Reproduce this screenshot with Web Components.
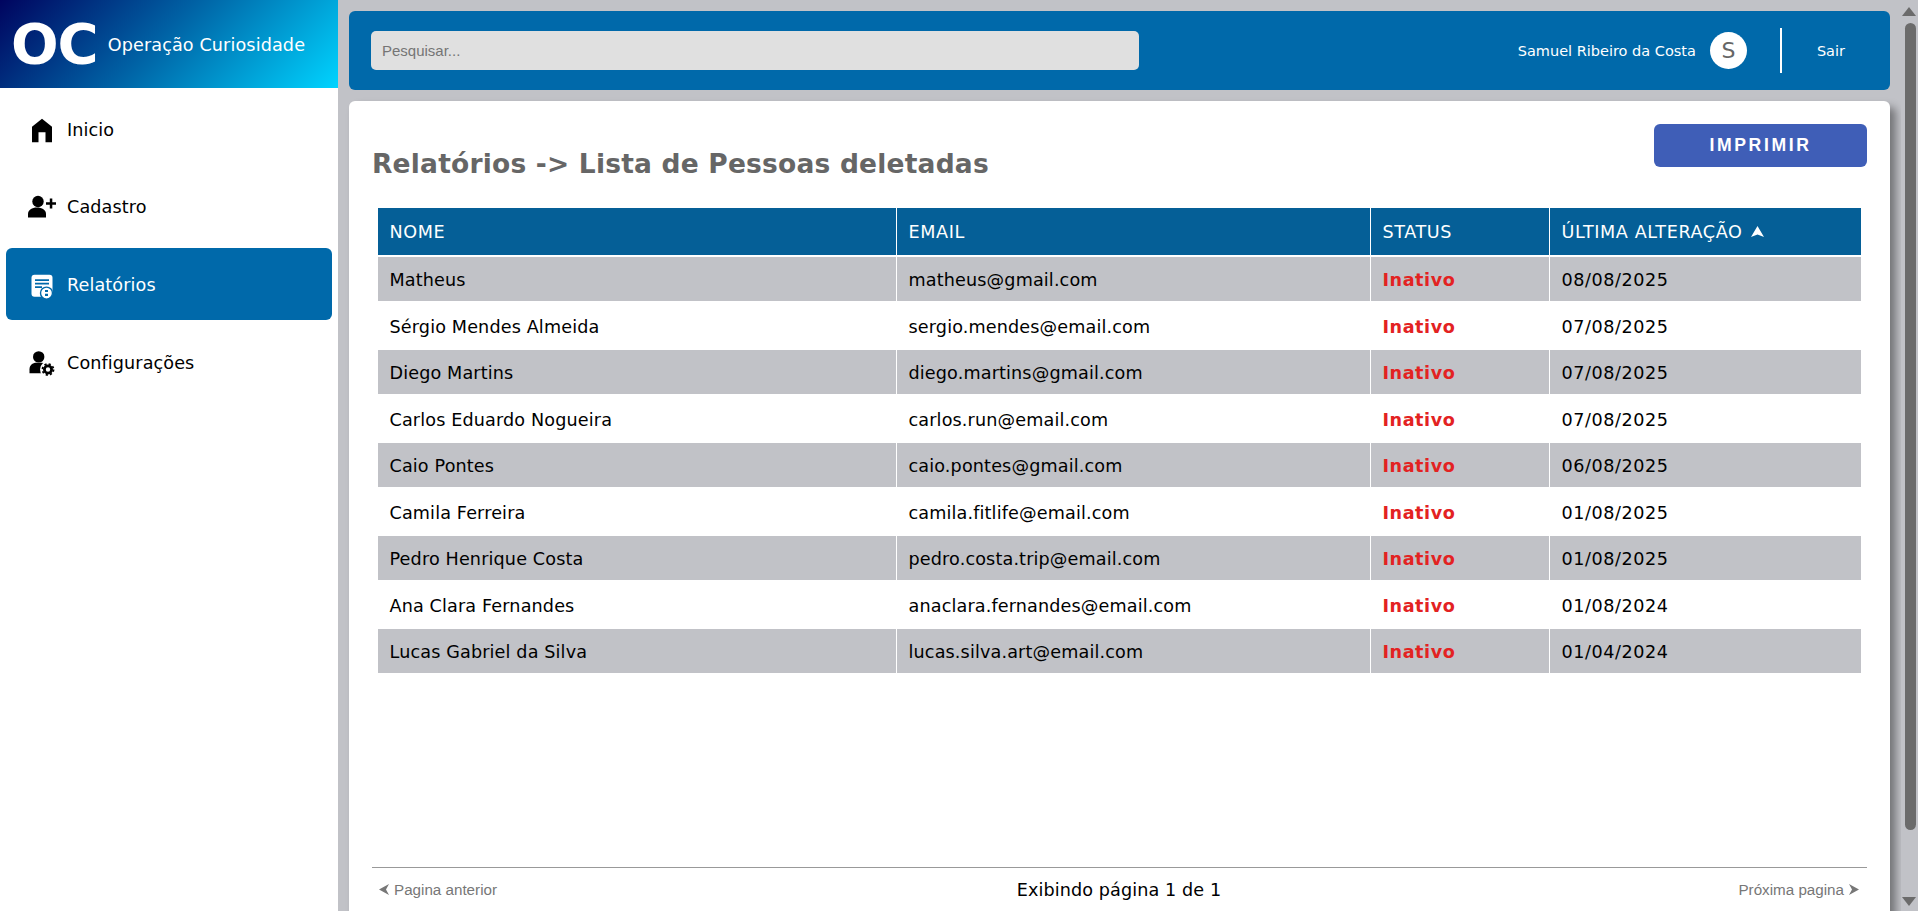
<!DOCTYPE html>
<html lang="pt-BR">
<head>
<meta charset="utf-8">
<title>Operação Curiosidade</title>
<style>
  html, body { margin: 0; height: 100%; overflow: hidden; background: #c1c2c7; }
  body { font-family: "DejaVu Sans", sans-serif; }
</style>
</head>
<body>
<oc-app>
  <oc-sidebar slot="sidebar">
    <oc-nav-item icon="home">Inicio</oc-nav-item>
    <oc-nav-item icon="user-plus">Cadastro</oc-nav-item>
    <oc-nav-item icon="report" active>Relatórios</oc-nav-item>
    <oc-nav-item icon="user-gear">Configurações</oc-nav-item>
  </oc-sidebar>
  <oc-topbar slot="topbar" user="Samuel Ribeiro da Costa"></oc-topbar>
  <oc-report-card slot="content" heading="Relatórios -> Lista de Pessoas deletadas">
    <oc-people-table></oc-people-table>
    <oc-pagination slot="footer" page="1" total="1"></oc-pagination>
  </oc-report-card>
  <oc-scrollbar slot="scrollbar"></oc-scrollbar>
</oc-app>

<script>
const ICONS = {
  home: `<svg viewBox="0 -1.200 40 40" width="40" height="40"><path d="M20 7.500 30 15.500V31h-6.500V21h-7v10H10V15.500z" fill="currentColor"/></svg>`,
  "user-plus": `<svg viewBox="0 -1.500 40 40" width="40" height="40"><circle cx="16" cy="13" r="5.700" fill="currentColor"/><path d="M6 29v-3.500c0-4 4-6.500 9-6.500s9 2.500 9 6.500V29z" fill="currentColor"/><path d="M27.800 10h2.500v3.800h3.700v2.500h-3.700V20h-2.500v-3.700H24v-2.500h3.800z" fill="currentColor"/></svg>`,
  report: `<svg viewBox="0 -.800 40 40" width="40" height="40"><rect x="9.500" y="9" width="21" height="22" rx="3" fill="currentColor"/><path d="M13 13.500h14v1.600H13zm0 3.500h14v1.600H13zm0 3.500h7v1.600h-7z" fill="var(--nav-bg)"/><circle cx="24.500" cy="27.300" r="6" fill="currentColor" stroke="var(--nav-bg)" stroke-width="1.400"/><path d="M23 24.300h3v2h-3zm0 3.700h3v2.200h-3z" fill="var(--nav-bg)"/></svg>`,
  "user-gear": `<svg viewBox="0 -1.200 40 40" width="40" height="40"><circle cx="16.700" cy="12.700" r="5.700" fill="currentColor"/><path d="M7.500 29v-4c0-4 3-6.500 7-6.500h5c3 0 5 1 6 3V29z" fill="currentColor"/><circle cx="26" cy="25.300" r="8" fill="var(--nav-bg)"/><circle cx="26" cy="25.300" r="3.600" fill="none" stroke="currentColor" stroke-width="2.800"/><circle cx="26" cy="25.300" r="5.500" fill="none" stroke="currentColor" stroke-width="1.800" stroke-dasharray="2.160 2.160"/></svg>`
};

class OcApp extends HTMLElement {
  constructor() {
    super();
    this.attachShadow({ mode: "open" });
    this.shadowRoot.innerHTML = `
      <style>
        :host { display: flex; width: 1918px; height: 911px; overflow: hidden; background: #c1c2c7; }
        .side { flex: 0 0 338px; height: 100%; }
        main {
          flex: 1; min-width: 0; height: 100%; overflow: hidden;
          padding: 11px 11px 0 11px; box-sizing: border-box;
          display: flex; flex-direction: column; gap: 11px;
        }
        .bar { flex: 0 0 17px; height: 100%; }
      </style>
      <div class="side"><slot name="sidebar"></slot></div>
      <main>
        <slot name="topbar"></slot>
        <slot name="content"></slot>
      </main>
      <div class="bar"><slot name="scrollbar"></slot></div>
    `;
  }
}

class OcSidebar extends HTMLElement {
  constructor() {
    super();
    this.attachShadow({ mode: "open" });
    this.shadowRoot.innerHTML = `
      <style>
        :host { display: flex; flex-direction: column; height: 100%; background: #fff; }
        .brand {
          height: 88px; box-sizing: border-box; padding-left: 11px;
          display: flex; align-items: center; gap: 10px; color: #fff;
          background: linear-gradient(135deg, #00045f 0%, #0069aa 50%, #00d4ff 100%);
        }
        .mark { font: 700 56px/1 "DejaVu Sans", sans-serif; letter-spacing: -1px; }
        .name { font-size: 17.600px; letter-spacing: .12px; margin-top: 2px; }
        nav { display: flex; flex-direction: column; gap: 6px; padding: 5px 6px; }
      </style>
      <div class="brand">
        <span class="mark">OC</span>
        <span class="name">Operação Curiosidade</span>
      </div>
      <nav><slot></slot></nav>
    `;
  }
}

class OcNavItem extends HTMLElement {
  constructor() {
    super();
    this.attachShadow({ mode: "open" });
  }

  connectedCallback() {
    const icon = ICONS[this.getAttribute("icon")] ?? "";
    this.shadowRoot.innerHTML = `
      <style>
        :host {
          --nav-bg: #fff;
          display: flex; align-items: center; height: 71.670px; padding: 2px 0 0 16px;
          border-radius: 6px; font-size: 17.600px; letter-spacing: .1px; color: #000; box-sizing: border-box;
        }
        :host([active]) { --nav-bg: #0069aa; background: #0069aa; color: #fff; }
        .icon { width: 45px; display: flex; }
        svg { display: block; }
      </style>
      <span class="icon">${icon}</span>
      <slot></slot>
    `;
  }
}

class OcTopbar extends HTMLElement {
  constructor() {
    super();
    this.attachShadow({ mode: "open" });
  }

  connectedCallback() {
    const user = this.getAttribute("user") ?? "";
    this.shadowRoot.innerHTML = `
      <style>
        :host {
          display: flex; align-items: center; height: 79px; flex: none; box-sizing: border-box;
          padding: 0 22px; background: #0069aa; color: #fff; border-radius: 6px;
        }
        input {
          width: 768px; height: 39px; box-sizing: border-box; border: 0; border-radius: 5px;
          background: #e0e0e0; padding: 0 11px; font: 15px "Liberation Sans", sans-serif; outline: 0;
        }
        input::placeholder { color: #757575; opacity: 1; }
        .user { margin-left: auto; font-size: 14.500px; }
        .avatar {
          width: 37px; height: 37px; border-radius: 50%; background: #fff; color: #666;
          display: grid; place-items: center; font-size: 22px; margin-left: 14px;
        }
        .divider { width: 2px; height: 45px; background: #fff; margin: 0 35px 0 33px; }
        .logout { font-size: 14.500px; margin-right: 23px; }
      </style>
      <input type="text" placeholder="Pesquisar...">
      <span class="user">${user}</span>
      <span class="avatar">${user.charAt(0)}</span>
      <span class="divider"></span>
      <span class="logout">Sair</span>
    `;
  }
}

class OcReportCard extends HTMLElement {
  constructor() {
    super();
    this.attachShadow({ mode: "open" });
  }

  connectedCallback() {
    const heading = (this.getAttribute("heading") ?? "").replace(/>/g, "&gt;");
    this.shadowRoot.innerHTML = `
      <style>
        :host {
          display: flex; flex-direction: column; box-sizing: border-box; height: 840px; flex: none;
          padding: 23px 23px 0; background: #fff; border-radius: 6px;
          box-shadow: 6px 6px 8px rgba(0, 0, 0, .4);
        }
        header { display: flex; justify-content: space-between; align-items: flex-start; height: 84px; flex: none; }
        h1 { margin: 24px 0 0; font-size: 26.500px; line-height: 32px; letter-spacing: .2px; font-weight: 700; color: #666; }
        button {
          width: 213px; height: 43px; border: 0; border-radius: 6px; background: #3f5eb7; color: #fff;
          font: 700 17.600px "Liberation Sans", sans-serif; letter-spacing: 2.600px;
        }
        .body { height: 659px; flex: none; padding: 0 6px; box-sizing: border-box; }
      </style>
      <header>
        <h1>${heading}</h1>
        <button type="button">IMPRIMIR</button>
      </header>
      <div class="body"><slot></slot></div>
      <div class="foot"><slot name="footer"></slot></div>
    `;
  }
}

const PEOPLE = [
  ["Matheus", "matheus@gmail.com", "08/08/2025"],
  ["Sérgio Mendes Almeida", "sergio.mendes@email.com", "07/08/2025"],
  ["Diego Martins", "diego.martins@gmail.com", "07/08/2025"],
  ["Carlos Eduardo Nogueira", "carlos.run@email.com", "07/08/2025"],
  ["Caio Pontes", "caio.pontes@gmail.com", "06/08/2025"],
  ["Camila Ferreira", "camila.fitlife@email.com", "01/08/2025"],
  ["Pedro Henrique Costa", "pedro.costa.trip@email.com", "01/08/2025"],
  ["Ana Clara Fernandes", "anaclara.fernandes@email.com", "01/08/2024"],
  ["Lucas Gabriel da Silva", "lucas.silva.art@email.com", "01/04/2024"]
];

class OcPeopleTable extends HTMLElement {
  constructor() {
    super();
    this.attachShadow({ mode: "open" });
    this.shadowRoot.innerHTML = `
      <style>
        :host { display: block; }
        table { width: 100%; border-collapse: separate; border-spacing: 0; table-layout: fixed; font-size: 17.600px; letter-spacing: .14px; color: #000; }
        th, td { padding: 0 11.500px; text-align: left; border: 0; border-right: 1px solid #fff; }
        th:last-child, td:last-child { border-right: 0; }
        th {
          height: 47px; background: #055f97; color: #fff; font-weight: 400; letter-spacing: .6px;
          border-bottom: 2px solid #fff;
        }
        td { height: 43px; padding-top: 1px; border-bottom: 2px solid #fff; }
        tbody tr:nth-child(odd) td { background: #c1c2c7; border-bottom-width: 3px; }
        .inactive { color: #e32222; font-weight: 700; letter-spacing: .55px; }
        .date { letter-spacing: .55px; }
        .sort { display: inline-block; vertical-align: 1px; margin-left: 2px; }
      </style>
      <table>
        <colgroup>
          <col style="width:519px"><col style="width:474px"><col style="width:179px"><col>
        </colgroup>
        <thead>
          <tr>
            <th>NOME</th><th>EMAIL</th><th>STATUS</th>
            <th>ÚLTIMA ALTERAÇÃO <svg class="sort" viewBox="0 0 13 11" width="13" height="11"><path d="M6.500 0 13 11 6.500 8.500 0 11z" fill="currentColor"/></svg></th>
          </tr>
        </thead>
        <tbody>
          ${PEOPLE.map(([name, email, date]) => `
            <tr><td>${name}</td><td>${email}</td><td class="inactive">Inativo</td><td class="date">${date}</td></tr>
          `).join("")}
        </tbody>
      </table>
    `;
  }
}

class OcPagination extends HTMLElement {
  constructor() {
    super();
    this.attachShadow({ mode: "open" });
  }

  connectedCallback() {
    const page = this.getAttribute("page");
    const total = this.getAttribute("total");
    this.shadowRoot.innerHTML = `
      <style>
        :host {
          display: grid; grid-template-columns: 1fr auto 1fr; align-items: center;
          height: 44px; box-sizing: border-box; padding: 0 8px 0 7px;
          border-top: 1px solid #999;
        }
        .link { color: #777; font: 15.200px "Liberation Sans", sans-serif; display: flex; align-items: center; gap: 5px; }
        .next { justify-content: flex-end; }
        .info { font-size: 17.600px; letter-spacing: .1px; color: #000; }
      </style>
      <span class="link"><svg viewBox="0 0 10 11" width="10" height="11"><path d="M10 0 7 5.500l3 5.500L0 5.500z" fill="currentColor"/></svg>Pagina anterior</span>
      <span class="info">Exibindo página ${page} de ${total}</span>
      <span class="link next">Próxima pagina<svg viewBox="0 0 10 11" width="10" height="11"><path d="M0 0l3 5.500L0 11l10-5.500z" fill="currentColor"/></svg></span>
    `;
  }
}

class OcScrollbar extends HTMLElement {
  constructor() {
    super();
    this.attachShadow({ mode: "open" });
    this.shadowRoot.innerHTML = `
      <style>
        :host { display: flex; flex-direction: column; height: 100%; background: #c1c2c7; box-sizing: border-box; padding-top: 7px; }
        .thumb { width: 11px; height: 807px; margin: 7px 0 67px 4px; border-radius: 6px; background: #6b6b6b; flex: none; }
        svg { display: block; flex: none; margin-left: 1px; }
      </style>
      <svg viewBox="0 0 14 9" width="14" height="9"><path d="M7 0l7 9H0z" fill="#6b6b6b"/></svg>
      <div class="thumb"></div>
      <svg viewBox="0 0 14 9" width="14" height="9"><path d="M0 0h14L7 9z" fill="#6b6b6b"/></svg>
    `;
  }
}

customElements.define("oc-app", OcApp);
customElements.define("oc-sidebar", OcSidebar);
customElements.define("oc-nav-item", OcNavItem);
customElements.define("oc-topbar", OcTopbar);
customElements.define("oc-report-card", OcReportCard);
customElements.define("oc-people-table", OcPeopleTable);
customElements.define("oc-pagination", OcPagination);
customElements.define("oc-scrollbar", OcScrollbar);
</script>
</body>
</html>
